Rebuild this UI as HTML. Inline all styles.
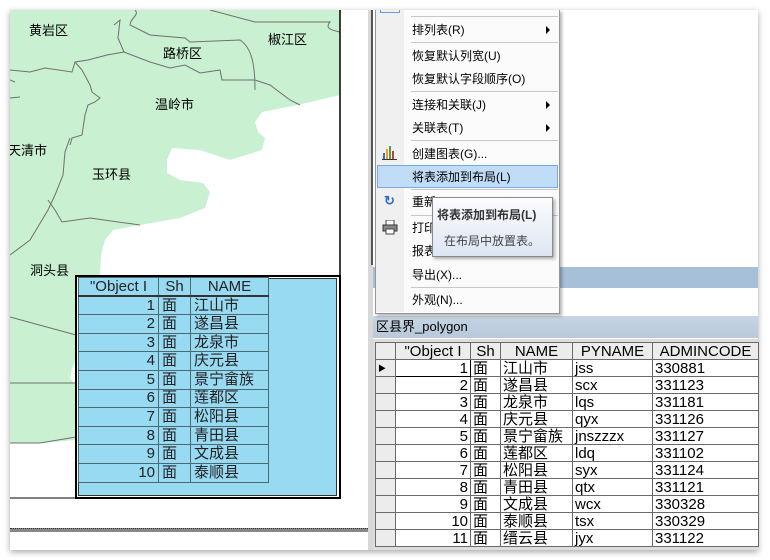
<!DOCTYPE html>
<html><head><meta charset="utf-8"><style>
*{margin:0;padding:0;box-sizing:border-box}
body{width:770px;height:560px;background:#fff;position:relative;overflow:hidden;font-family:"Liberation Sans","Noto Sans CJK SC",sans-serif;font-size:12px;color:#000}
.abs{position:absolute}
.mi{position:absolute;left:412px;font-size:12px;line-height:14px}
.sep{position:absolute;left:411px;width:147px;height:1px;background:#c8c8c8}
.arr{position:absolute;left:546px;width:0;height:0;border-top:4px solid transparent;border-bottom:4px solid transparent;border-left:4px solid #000}
table{border-collapse:collapse;position:absolute;table-layout:fixed}
.lt td{border:1px solid #4a6a72;height:18.6px;padding:0 3px;font-size:15px;line-height:16px;color:#222;overflow:hidden;white-space:nowrap}
.lt tr:first-child td{border-bottom:2px solid #333}
.rt td{border:1px solid #6a6a6a;height:17px;padding:0 2px;font-size:15px;line-height:15px;background:#fff;overflow:hidden;white-space:nowrap}
.rt td.h{background:#ececec}
</style></head><body>
<div class="abs" style="left:10px;top:10px;width:748px;height:540px;box-shadow:0 2px 6px rgba(0,0,0,.35);background:#fff"></div>
<svg class="abs" style="left:10px;top:10px" width="331" height="489" viewBox="10 10 331 489">
<rect x="10" y="10" width="331" height="489" fill="#fff"/>
<path d="M10 10 H340 V95 L298 105 L262 112 L255 122 L258 132 L265 138 L262 150 L230 160 L200 150 L172 148 L167 160 L167 173 L180 180 L203 183 L210 192 L205 208 L180 218 L140 225 L113 230 L105 240 L101 255 L100 275 L76 275 L76 360 L72 368 L70 378 L76 386 L76 440 L40 443 L10 443 Z" fill="#c9f0d1"/>
<g fill="none" stroke="#707070" stroke-width="1">
<path d="M135 10 C140 15 130 18 130 25 L150 35 L185 38 L190 42 L240 40 C252 48 255 65 255 90"/>
<path d="M114 25 L120 20 L118 38 L124 52 L107 55 L88 60 L75 62 L72 72 L45 68 L30 72 L10 70"/>
<path d="M124 52 L150 62 L170 68 L185 65 L200 73 L220 70 L222 80 L255 80 L270 85 L290 100 L300 105"/>
<path d="M210 10 L255 22 L330 22 C325 28 330 30 340 32"/>
<path d="M75 62 L82 70 L90 85 L92 92 L100 98 L95 102 L88 105 L85 115 L82 135 L72 138 L70 145"/>
<path d="M70 138 L65 152 L63 175 L55 195 L48 210 L30 240 L10 255"/>
<path d="M48 200 L55 210 L62 222 L90 218 L140 225"/>
<path d="M10 317 L76 335"/>
<path d="M10 383 L76 383"/>
<path d="M10 443 L40 443 L76 437"/>
<path d="M10 80 L15 82 M10 98 L20 97"/>
</g>
<g font-size="13" fill="#000" font-family="Liberation Sans,'Noto Sans CJK SC',sans-serif">
<text x="29" y="35">黄岩区</text>
<text x="268" y="44">椒江区</text>
<text x="163" y="58">路桥区</text>
<text x="155" y="109">温岭市</text>
<text x="8" y="155">天清市</text>
<text x="92" y="179">玉环县</text>
<text x="30" y="275">洞头县</text>
</g>
<line x1="340" y1="10" x2="340" y2="499" stroke="#000" stroke-width="1.5"/>
<line x1="10" y1="498" x2="340" y2="498" stroke="#000"/>
</svg>
<div class="abs" style="left:75px;top:275px;width:266px;height:224px;border:2px solid #000;background:#fff"></div>
<div class="abs" style="left:78px;top:278px;width:259px;height:218px;background:#98daf2;border:1px solid #333"></div>
<table class="lt" style="left:78px;top:277px;width:190px">
<col style="width:80px"><col style="width:32px"><col style="width:78px">
<tr style="background:#98daf2"><td style="text-align:center">"Object I</td><td style="text-align:center">Sh</td><td style="text-align:center">NAME</td></tr>
<tr><td align="right">1</td><td>面</td><td>江山市</td></tr>
<tr><td align="right">2</td><td>面</td><td>遂昌县</td></tr>
<tr><td align="right">3</td><td>面</td><td>龙泉市</td></tr>
<tr><td align="right">4</td><td>面</td><td>庆元县</td></tr>
<tr><td align="right">5</td><td>面</td><td>景宁畲族</td></tr>
<tr><td align="right">6</td><td>面</td><td>莲都区</td></tr>
<tr><td align="right">7</td><td>面</td><td>松阳县</td></tr>
<tr><td align="right">8</td><td>面</td><td>青田县</td></tr>
<tr><td align="right">9</td><td>面</td><td>文成县</td></tr>
<tr><td align="right">10</td><td>面</td><td>泰顺县</td></tr>
</table>
<div class="abs" style="left:10px;top:528px;width:358px;height:4px;background:#888;border-top:1px dotted #333"></div>
<div class="abs" style="left:368px;top:10px;width:5px;height:540px;background:#d8d8d8"></div>
<div class="abs" style="left:371px;top:10px;width:2px;height:255px;background:#555"></div>
<div class="abs" style="left:373px;top:267px;width:385px;height:21px;background:#a7c0d9"></div>
<div class="abs" style="left:373px;top:316px;width:385px;height:22px;background:linear-gradient(#c6d4e3,#b8c9da);font-size:13px;line-height:22px;padding-left:3px">区县界_polygon</div>
<div class="abs" style="left:373px;top:339px;width:385px;height:211px;background:#ddd"></div>
<table class="rt" style="left:375px;top:342px;width:383px">
<col style="width:20px"><col style="width:75px"><col style="width:30px"><col style="width:72px"><col style="width:80px"><col style="width:106px">
<tr><td class="h"></td><td class="h" style="text-align:center">"Object I</td><td class="h" style="text-align:center">Sh</td><td class="h" style="text-align:center">NAME</td><td class="h" style="text-align:center">PYNAME</td><td class="h" style="text-align:center">ADMINCODE</td></tr>
<tr><td class="h" style="font-size:8px">▶</td><td align="right" style="border:1px solid #000">1</td><td>面</td><td>江山市</td><td>jss</td><td>330881</td></tr>
<tr><td class="h"></td><td align="right">2</td><td>面</td><td>遂昌县</td><td>scx</td><td>331123</td></tr>
<tr><td class="h"></td><td align="right">3</td><td>面</td><td>龙泉市</td><td>lqs</td><td>331181</td></tr>
<tr><td class="h"></td><td align="right">4</td><td>面</td><td>庆元县</td><td>qyx</td><td>331126</td></tr>
<tr><td class="h"></td><td align="right">5</td><td>面</td><td>景宁畲族</td><td>jnszzzx</td><td>331127</td></tr>
<tr><td class="h"></td><td align="right">6</td><td>面</td><td>莲都区</td><td>ldq</td><td>331102</td></tr>
<tr><td class="h"></td><td align="right">7</td><td>面</td><td>松阳县</td><td>syx</td><td>331124</td></tr>
<tr><td class="h"></td><td align="right">8</td><td>面</td><td>青田县</td><td>qtx</td><td>331121</td></tr>
<tr><td class="h"></td><td align="right">9</td><td>面</td><td>文成县</td><td>wcx</td><td>330328</td></tr>
<tr><td class="h"></td><td align="right">10</td><td>面</td><td>泰顺县</td><td>tsx</td><td>330329</td></tr>
<tr><td class="h"></td><td align="right">11</td><td>面</td><td>缙云县</td><td>jyx</td><td>331122</td></tr>
</table>
<div class="abs" style="left:375px;top:10px;width:185px;height:304px;background:#fbfbfb;border:1px solid #979797;border-top:none;box-shadow:2px 2px 3px rgba(0,0,0,.3)"></div>
<div class="abs" style="left:376px;top:10px;width:28px;height:302px;background:#f0f0f0"></div>
<div class="abs" style="left:380px;top:10px;width:20px;height:3px;border:1px solid #6a9ad8;border-top:none"></div>
<div class="sep" style="top:16px"></div>
<div class="mi" style="top:23px">排列表(R)</div><div class="arr" style="top:26px"></div>
<div class="sep" style="top:42px"></div>
<div class="mi" style="top:49px">恢复默认列宽(U)</div>
<div class="mi" style="top:72px">恢复默认字段顺序(O)</div>
<div class="sep" style="top:91px"></div>
<div class="mi" style="top:98px">连接和关联(J)</div><div class="arr" style="top:101px"></div>
<div class="mi" style="top:121px">关联表(T)</div><div class="arr" style="top:124px"></div>
<div class="sep" style="top:140px"></div>
<svg class="abs" style="left:382px;top:146px" width="16" height="14"><rect x="1" y="7" width="2" height="7" fill="#3a6fc0"/><rect x="4" y="3" width="2" height="11" fill="#f0a020"/><rect x="7" y="0" width="2" height="14" fill="#50a040"/><rect x="10" y="5" width="2" height="9" fill="#c04040"/><rect x="0" y="13" width="15" height="1" fill="#333"/></svg>
<div class="mi" style="top:147px">创建图表(G)...</div>
<div class="abs" style="left:377px;top:165px;width:181px;height:23px;background:#c0dcf7;border:1px solid #7aa8e0"></div>
<div class="mi" style="top:170px">将表添加到布局(L)</div>
<div class="sep" style="top:189px"></div>
<div class="abs" style="left:384px;top:193px;font-size:13px;color:#2a70c8;font-weight:bold">↻</div>
<div class="mi" style="top:195px">重新</div>
<div class="sep" style="top:215px"></div>
<svg class="abs" style="left:382px;top:220px" width="16" height="15"><rect x="4" y="0" width="8" height="5" fill="#fff" stroke="#444"/><rect x="1" y="5" width="14" height="6" fill="#888" stroke="#333"/><rect x="4" y="9" width="8" height="5" fill="#fff" stroke="#444"/></svg>
<div class="mi" style="top:221px">打印</div>
<div class="mi" style="top:244px">报表</div>
<div class="mi" style="top:268px">导出(X)...</div>
<div class="sep" style="top:287px"></div>
<div class="mi" style="top:293px">外观(N)...</div>
<div class="abs" style="left:432px;top:197px;width:121px;height:60px;background:linear-gradient(#fbfcfe,#dde6f3);border:1px solid #8a8a8a;box-shadow:2px 2px 3px rgba(0,0,0,.3)"></div>
<div class="abs" style="left:437px;top:206px;font-size:12px;font-weight:bold;color:#333">将表添加到布局(L)</div>
<div class="abs" style="left:444px;top:232px;font-size:12px;color:#444">在布局中放置表。</div>
</body></html>
